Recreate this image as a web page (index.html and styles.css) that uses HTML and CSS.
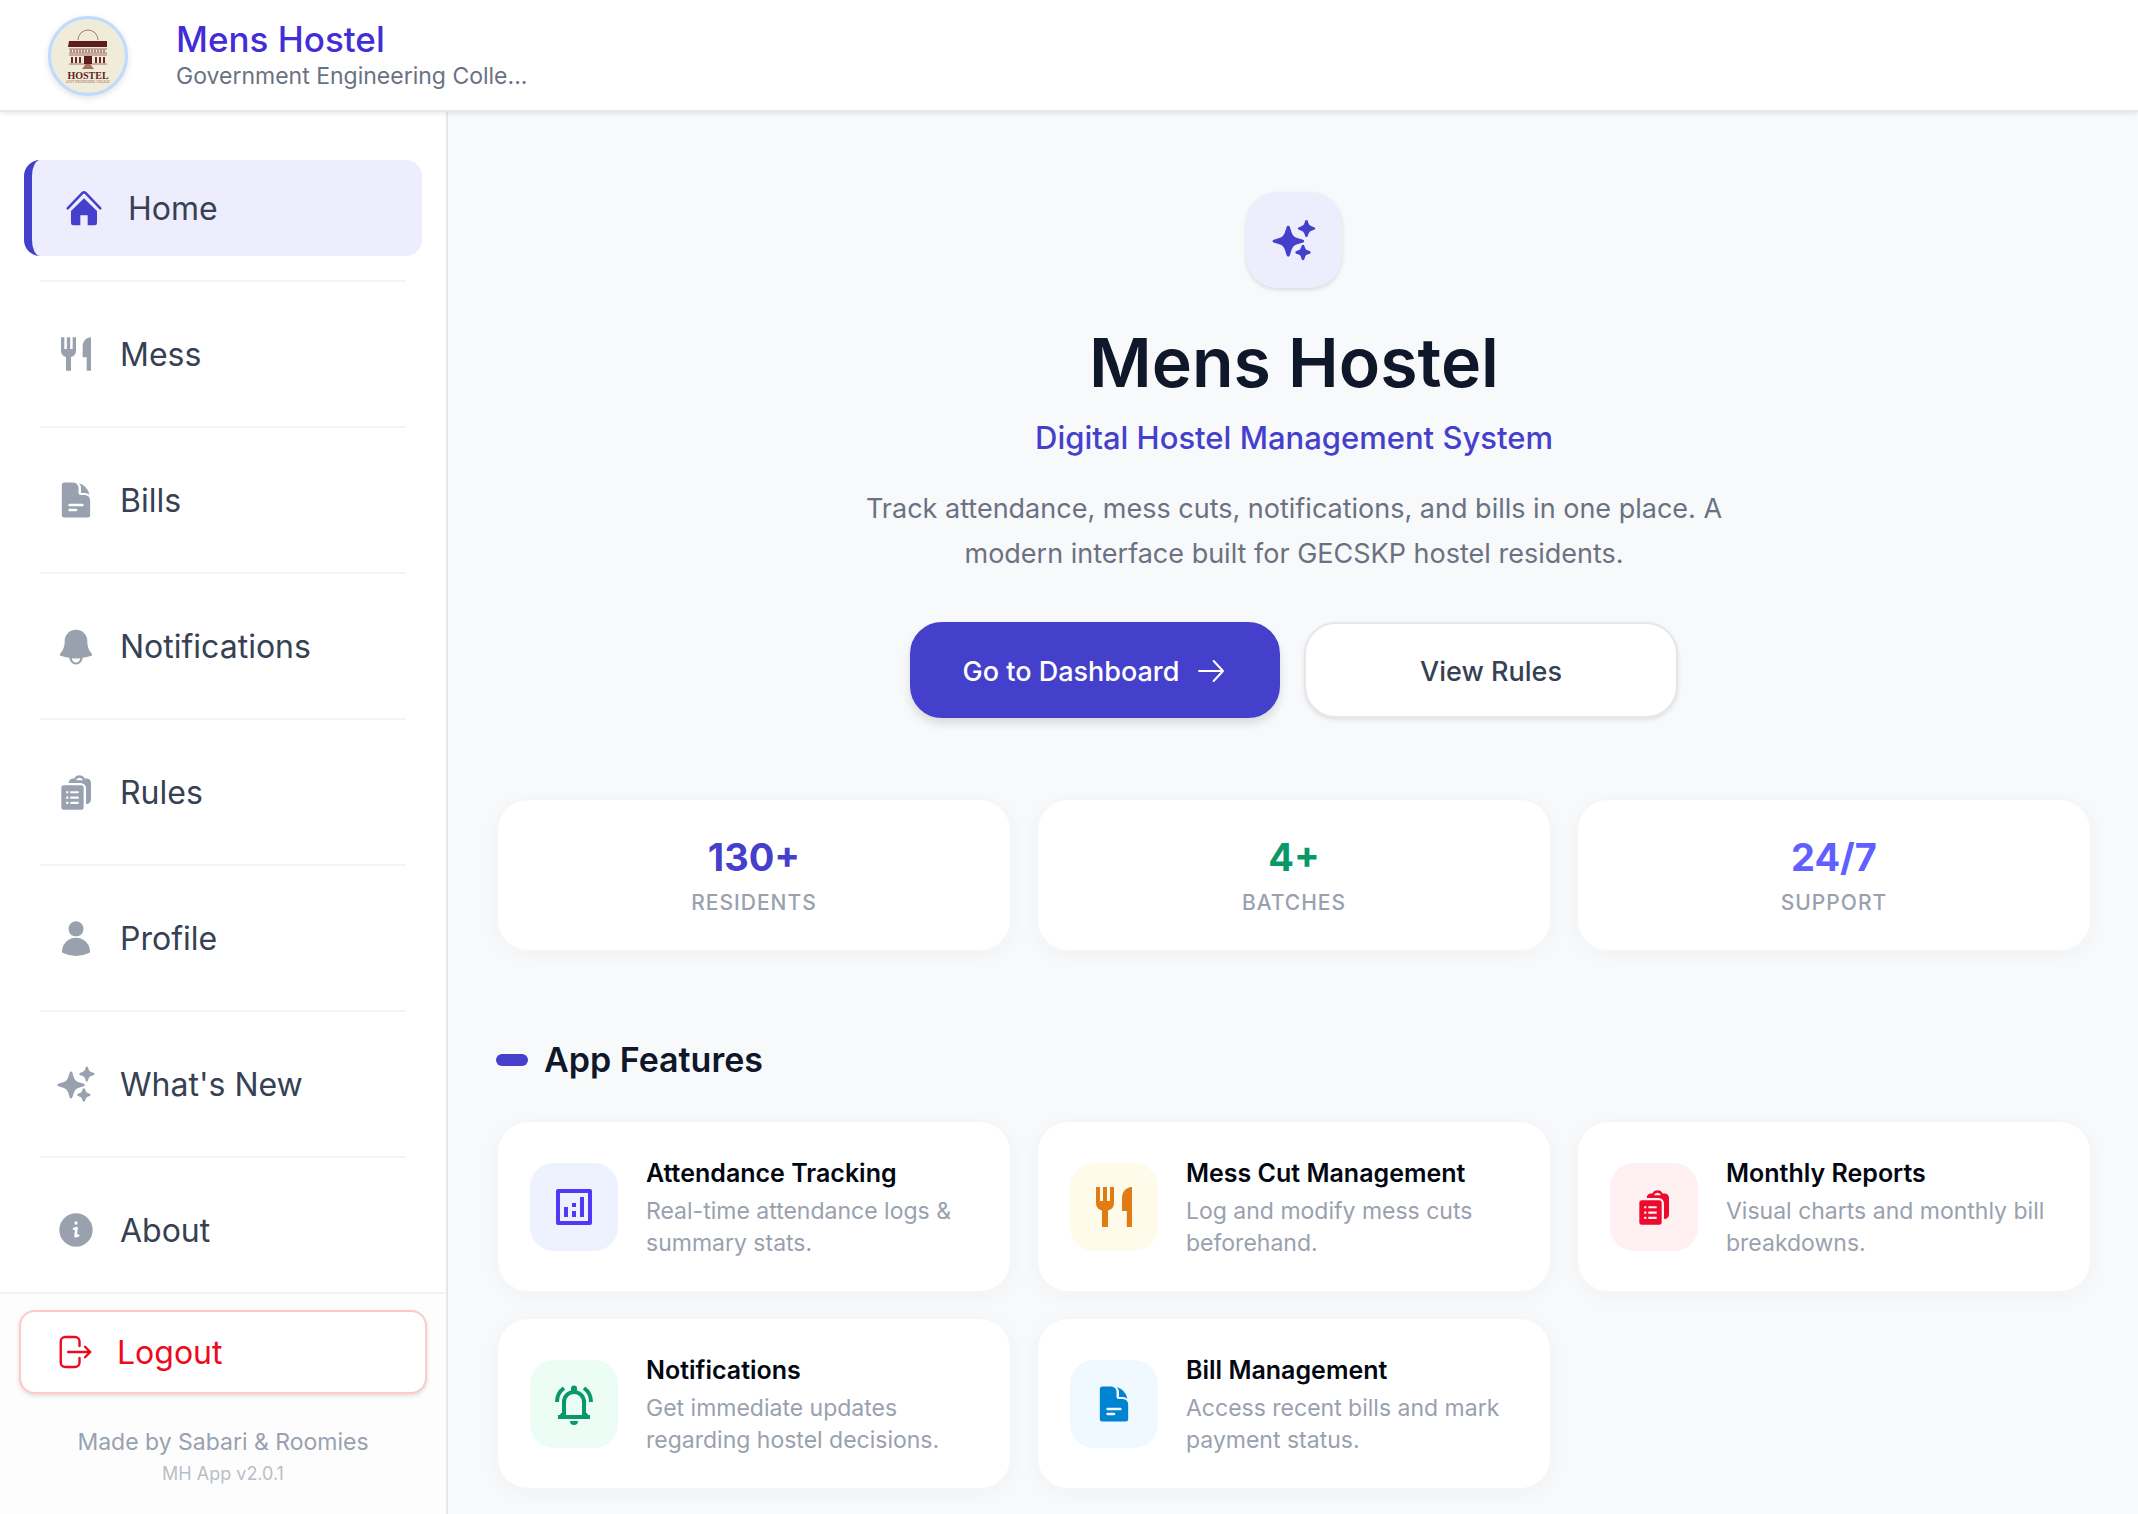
FILE: index.html
```
<!DOCTYPE html>
<html lang="en">
<head>
    <meta charset="UTF-8">
    <meta name="viewport" content="width=device-width, initial-scale=1">
    <title>Mens Hostel</title>
    <link rel="stylesheet" href="styles.css">
</head>
<body>
    <!-- Icons shared by the sidebar and the cards -->
    <svg class="sprite" aria-hidden="true">
        <symbol id="i-home" viewBox="0 0 24 24">
            <path d="M2.2 12.2 11.1 3a1.3 1.3 0 0 1 1.8 0l8.9 9.2" fill="none" stroke="currentColor" stroke-width="1.5" stroke-linecap="round"/>
            <path d="M12 6.2 19.800 13.800V21a1.4 1.4 0 0 1-1.4 1.4H14.200V16.400H9.800V22.400H5.600A1.400 1.400 0 0 1 4.200 21V13.800z"/>
        </symbol>
        <symbol id="i-mess" viewBox="0 0 24 24">
            <path d="M3 2h2v7h1.500V2h2v7H10V2h2v8a4 4 0 0 1-3 3.800V22H6v-8.200A4 4 0 0 1 3 10zM21 2v20h-2.600v-8H16V7.500C16 4.500 18 2 21 2z"/>
        </symbol>
        <symbol id="i-doc" viewBox="0 0 24 24">
            <path fill-rule="evenodd" d="M3.500 3A1.500 1.500 0 0 1 5 1.500h5.500A3.200 3.200 0 0 1 13.500 4.700V7.500A1.500 1.500 0 0 0 15 9h2.300a3.200 3.200 0 0 1 3.200 3.200V21a1.500 1.500 0 0 1-1.500 1.500H5A1.500 1.500 0 0 1 3.500 21zM8.200 14.200a.8.800 0 0 0 0 1.600h7.600a.8.800 0 0 0 0-1.600zM8.200 17.200a.8.800 0 0 0 0 1.600H12a.8.800 0 0 0 0-1.600z"/>
            <path d="M13.600 1.800a9.400 9.400 0 0 1 6.400 7 4.500 4.500 0 0 0-2.700-1H15V4.700c0-1.100-.6-2.100-1.400-2.900z"/>
        </symbol>
        <symbol id="i-bell" viewBox="0 0 24 24">
            <path fill-rule="evenodd" d="M5.200 9a6.800 6.800 0 0 1 13.600 0v.8c0 2.600.9 5 2.700 6.900.4.400.2 1-.3 1.200a24 24 0 0 1-5.200 1.200 4 4 0 0 1-8 0 24 24 0 0 1-5.200-1.200c-.5-.2-.7-.8-.3-1.200A10.500 10.500 0 0 0 5.200 9.800zM9.500 19.400a2.500 2.500 0 0 0 5 0 30 30 0 0 1-5 0z"/>
        </symbol>
        <symbol id="i-rules" viewBox="0 0 24 24">
            <path fill-rule="evenodd" d="M4.700 8h10.400A1.500 1.500 0 0 1 16.600 9.500V21.200A1.500 1.500 0 0 1 15.100 22.700H4.700A1.500 1.500 0 0 1 3.200 21.200V9.500A1.500 1.500 0 0 1 4.700 8zM6.100 11.500v1.300h1.300v-1.300zM8.600 11.500v1.300h5v-1.300zM6.100 14.700V16h1.300v-1.300zM8.600 14.700V16h5v-1.300zM6.100 17.900v1.300h1.300v-1.300zM8.600 17.900v1.300h5v-1.300z"/>
            <path fill-rule="evenodd" d="M7.600 6.600A2.600 2.600 0 0 1 10.200 3.900H11A3.400 3.400 0 0 1 14.100 1.900a3.400 3.400 0 0 1 3.100 2h1.200A2.600 2.600 0 0 1 21 6.500V16.600a2.600 2.600 0 0 1-3 2.500V9.800A3.200 3.200 0 0 0 14.800 6.600zM12 4.900h4.200A2.200 2.200 0 0 0 14.100 3.400a2.200 2.200 0 0 0-2.100 1.500z"/>
        </symbol>
        <symbol id="i-user" viewBox="0 0 24 24">
            <circle cx="12" cy="6.500" r="4.500"/>
            <path d="M3.600 20.200a8.400 8.400 0 0 1 16.800 0c0 .4-.2.700-.5.800a19 19 0 0 1-15.800 0c-.3-.1-.5-.4-.5-.8z"/>
        </symbol>
        <symbol id="i-spark" viewBox="0 0 24 24">
            <path d="M9 4.500q.6 0 .8.600l.9 2.900a4.500 4.500 0 0 0 3 3l3 .9q.6.200.6.700t-.6.700l-3 .9a4.500 4.500 0 0 0-3 3l-.9 2.900q-.2.600-.8.600t-.8-.6l-.9-2.900a4.500 4.500 0 0 0-3-3l-2.900-.9q-.6-.2-.6-.7t.6-.7l2.900-.9a4.500 4.500 0 0 0 3-3l.9-2.900q.2-.6.8-.6z"/>
            <path d="M18.500 1.500q.5 0 .7.600l.3 1a2.600 2.600 0 0 0 1.900 1.900l1.100.3q.6.200.6.700t-.6.700l-1.100.3a2.600 2.600 0 0 0-1.900 1.900l-.3 1q-.2.600-.7.600t-.7-.6l-.3-1A2.600 2.600 0 0 0 15.600 7l-1-.3Q14 6.500 14 6t.6-.7l1-.3a2.600 2.600 0 0 0 1.900-1.900l.3-1q.2-.6.700-.6z"/>
            <path d="M16.700 14.500q.5 0 .7.500l.4 1.200a1.900 1.900 0 0 0 1.200 1.200l1.200.4q.5.200.5.700t-.5.700l-1.200.4a1.900 1.900 0 0 0-1.200 1.200l-.4 1.200q-.2.500-.7.500t-.7-.5l-.4-1.200a1.900 1.900 0 0 0-1.200-1.200l-1.200-.4q-.5-.2-.5-.7t.5-.7l1.200-.4a1.900 1.900 0 0 0 1.200-1.200l.4-1.200q.2-.5.700-.5z"/>
        </symbol>
        <symbol id="i-info" viewBox="0 0 24 24">
            <circle cx="12" cy="12" r="10"/>
            <circle cx="12" cy="7.800" r="1" fill="#fff"/>
            <path d="M10.800 11.300 12.300 10.800 11.700 15.800 13.300 15.300" fill="none" stroke="#fff" stroke-width="1.500" stroke-linecap="round" stroke-linejoin="round"/>
        </symbol>
        <symbol id="i-chart" viewBox="0 0 24 24">
            <path d="M4 4h16v16H4z" fill="none" stroke="currentColor" stroke-width="2" stroke-linejoin="round"/>
            <path d="M7 12h2v5H7zM11 10h2v2h-2zM11 14h2v3h-2zM15 7h2v10h-2z"/>
        </symbol>
        <symbol id="i-ring" viewBox="0 0 24 24">
            <path d="M4 18.500h16M7 18.500V11a5 5 0 0 1 10 0v7.500M3.500 11A8.500 8.500 0 0 1 7 4M20.500 11A8.500 8.500 0 0 0 17 4" fill="none" stroke="currentColor" stroke-width="2"/>
            <path d="M5.500 16.500h1v2h-2zM18.500 16.500h-1v2h2zM10.500 6V4.300a1.500 1.500 0 0 1 3 0V6zM10 20.500h4a2 2 0 0 1-4 0z"/>
        </symbol>
        <symbol id="i-logout" viewBox="0 0 24 24">
            <path d="M15 8V5a3 3 0 0 0-3-3H5.500a3 3 0 0 0-3 3v14a3 3 0 0 0 3 3H12a3 3 0 0 0 3-3v-3M7.500 12H22M18.700 8.500 22.200 12l-3.500 3.500" fill="none" stroke="currentColor" stroke-width="1.600" stroke-linecap="round" stroke-linejoin="round"/>
        </symbol>
        <symbol id="i-arrow" viewBox="0 0 24 24">
            <path d="M3 12h18M14 4.500 21 12l-7 7.500" fill="none" stroke="currentColor" stroke-width="1.500" stroke-linecap="round" stroke-linejoin="round"/>
        </symbol>
    </svg>

    <header class="topbar">
        <svg class="logo" viewBox="0 0 74 74" role="img" aria-label="Hostel">
            <path d="M27 21a10 10 0 0 1 20 0" fill="none" stroke="#a77a6c" stroke-width="1"/>
            <path d="M18 22h38v6H17z" fill="#5f1d1b"/>
            <path d="M18 30h38M18 34h38M18 36h38M18 45h38" stroke="#a06a5f" stroke-width="1"/>
            <path d="M19 32h36" stroke="#a98a84" stroke-width="3" stroke-dasharray="2 1"/>
            <path d="M21 38v6M25 38v6M29 38v6M45 38v6M49 38v6M53 38v6" stroke="#6d2724" stroke-width="2"/>
            <path d="M33 37h8v8h-8z" fill="#5f1d1b"/>
            <path d="M35 45h4l4 5H31z" fill="#a8705f"/>
            <text class="logo-name" x="37" y="60" text-anchor="middle">HOSTEL</text>
            <text class="logo-tag" x="37" y="64" text-anchor="middle">GOVT ENGINEERING COLLEGE</text>
        </svg>
        <div class="brand">
            <div class="brand-name">Mens Hostel</div>
            <div class="brand-sub">Government Engineering Colle...</div>
        </div>
    </header>

    <div class="layout">
        <aside class="sidebar">
            <nav class="menu">
                <a href="#" class="item active"><svg class="icon"><use href="#i-home"/></svg>Home</a>
                <a href="#" class="item"><svg class="icon"><use href="#i-mess"/></svg>Mess</a>
                <a href="#" class="item"><svg class="icon"><use href="#i-doc"/></svg>Bills</a>
                <a href="#" class="item"><svg class="icon"><use href="#i-bell"/></svg>Notifications</a>
                <a href="#" class="item"><svg class="icon"><use href="#i-rules"/></svg>Rules</a>
                <a href="#" class="item"><svg class="icon"><use href="#i-user"/></svg>Profile</a>
                <a href="#" class="item"><svg class="icon"><use href="#i-spark"/></svg>What's New</a>
                <a href="#" class="item"><svg class="icon"><use href="#i-info"/></svg>About</a>
            </nav>
            <div class="side-footer">
                <button type="button" class="logout"><svg class="icon"><use href="#i-logout"/></svg>Logout</button>
                <p class="made">Made by Sabari &amp; Roomies</p>
                <p class="version">MH App v2.0.1</p>
            </div>
        </aside>

        <main class="content">
            <section class="hero">
                <div class="hero-icon"><svg><use href="#i-spark"/></svg></div>
                <h1>Mens Hostel</h1>
                <p class="subtitle">Digital Hostel Management System</p>
                <p class="lead">Track attendance, mess cuts, notifications, and bills in one place. A modern interface built for GECSKP hostel residents.</p>
                <div class="actions">
                    <button type="button" class="btn primary">Go to Dashboard <svg><use href="#i-arrow"/></svg></button>
                    <button type="button" class="btn">View Rules</button>
                </div>
            </section>

            <section class="grid stats">
                <div class="stat">
                    <div class="number indigo">130+</div>
                    <div class="label">RESIDENTS</div>
                </div>
                <div class="stat">
                    <div class="number green">4+</div>
                    <div class="label">BATCHES</div>
                </div>
                <div class="stat">
                    <div class="number violet">24/7</div>
                    <div class="label">SUPPORT</div>
                </div>
            </section>

            <h2><span class="pill"></span>App Features</h2>

            <section class="grid">
                <div class="feature">
                    <div class="tile tile-indigo"><svg><use href="#i-chart"/></svg></div>
                    <div>
                        <h3>Attendance Tracking</h3>
                        <p>Real-time attendance logs &amp; summary stats.</p>
                    </div>
                </div>
                <div class="feature">
                    <div class="tile tile-amber"><svg><use href="#i-mess"/></svg></div>
                    <div>
                        <h3>Mess Cut Management</h3>
                        <p>Log and modify mess cuts beforehand.</p>
                    </div>
                </div>
                <div class="feature">
                    <div class="tile tile-red"><svg class="small"><use href="#i-rules"/></svg></div>
                    <div>
                        <h3>Monthly Reports</h3>
                        <p>Visual charts and monthly bill breakdowns.</p>
                    </div>
                </div>
                <div class="feature">
                    <div class="tile tile-green"><svg><use href="#i-ring"/></svg></div>
                    <div>
                        <h3>Notifications</h3>
                        <p>Get immediate updates regarding hostel decisions.</p>
                    </div>
                </div>
                <div class="feature">
                    <div class="tile tile-blue"><svg class="small"><use href="#i-doc"/></svg></div>
                    <div>
                        <h3>Bill Management</h3>
                        <p>Access recent bills and mark payment status.</p>
                    </div>
                </div>
            </section>
        </main>
    </div>
</body>
</html>
```
FILE: styles.css
```
* {
    box-sizing: border-box;
    margin: 0;
    padding: 0;
}

body {
    display: flex;
    flex-direction: column;
    height: 100vh;
    overflow: hidden;
    background-color: #f8f9fb;
    font-family: Inter, "Noto Sans", sans-serif;
    color: #0f172a;
}

svg {
    fill: currentColor;
    flex-shrink: 0;
}

button {
    font-family: inherit;
    cursor: pointer;
}

.sprite {
    display: none;
}

/* Top bar */
.topbar {
    position: relative;
    z-index: 1;
    display: flex;
    align-items: center;
    gap: 48px;
    flex-shrink: 0;
    padding: 16px 48px 14px;
    background-color: #ffffff;
    border-bottom: 2px solid #e5e7eb;
    box-shadow: 0 2px 4px rgba(0,0,0,0.08);
}

.logo {
    width: 80px;
    height: 80px;
    border: 3px solid #bedbff;
    border-radius: 50%;
    background-color: #f0ecd9;
    box-shadow: 0 2px 6px rgba(0,0,0,0.12);
}

.logo-name {
    font-family: "Liberation Serif", serif;
    font-size: 10px;
    font-weight: bold;
    fill: #5f1d1b;
}

.logo-tag {
    font-family: "Liberation Serif", serif;
    font-size: 3px;
    fill: #8a5b57;
}

.brand-name {
    font-size: 35px;
    font-weight: 500;
    line-height: 40px;
    color: #432dd7;
}

.brand-sub {
    font-size: 23px;
    line-height: 34px;
    color: #6a7282;
}

/* Sidebar */
.layout {
    display: flex;
    flex: 1;
    min-height: 0;
}

.sidebar {
    display: flex;
    flex-direction: column;
    width: 448px;
    flex-shrink: 0;
    background-color: #ffffff;
    border-right: 2px solid #e5e7eb;
}

.menu {
    flex: 1;
    min-height: 0;
    overflow: hidden;
    padding: 48px 24px 0;
}

.item {
    display: flex;
    align-items: center;
    gap: 24px;
    height: 96px;
    padding: 0 32px;
    border-radius: 16px;
    font-size: 32px;
    color: #364153;
    text-decoration: none;
}

.item + .item {
    position: relative;
    margin-top: 50px;
}

.item + .item::before {
    content: "";
    position: absolute;
    top: -26px;
    left: 16px;
    right: 16px;
    height: 2px;
    background-color: #f3f4f6;
}

.item .icon {
    width: 40px;
    height: 40px;
    color: #99a1af;
}

.active {
    border-left: 8px solid #4540cc;
    background-color: #eeedfe;
}

.item.active .icon {
    color: #4540cc;
}

.side-footer {
    padding: 16px 19px 24px;
    border-top: 2px solid #f3f4f6;
    background-color: #fdfdfe;
    text-align: center;
}

.logout {
    display: flex;
    align-items: center;
    gap: 24px;
    width: 100%;
    height: 84px;
    padding: 0 36px;
    border: 2px solid #ffc9c9;
    border-radius: 16px;
    background-color: #ffffff;
    box-shadow: 0 2px 4px rgba(0,0,0,0.12);
    font-size: 32px;
    color: #ec0a20;
}

.logout .icon {
    width: 36px;
    height: 36px;
}

.made {
    margin-top: 32px;
    font-size: 23px;
    line-height: 32px;
    color: #99a1af;
}

.version {
    font-size: 18px;
    line-height: 32px;
    color: #b9bec8;
}

/* Main content */
.content {
    flex: 1;
    overflow: hidden;
    padding: 80px 46px 0 48px;
}

.hero {
    display: flex;
    flex-direction: column;
    align-items: center;
    text-align: center;
}

.hero-icon {
    display: flex;
    align-items: center;
    justify-content: center;
    width: 96px;
    height: 96px;
    border-radius: 32px;
    background-color: #eeedfe;
    box-shadow: 0 2px 4px rgba(0,0,0,0.12);
    color: #4540cc;
}

.hero-icon svg {
    width: 46px;
    height: 46px;
}

h1 {
    margin-top: 34px;
    font-size: 68px;
    font-weight: 600;
    line-height: 80px;
}

.subtitle {
    margin-top: 16px;
    font-size: 31px;
    font-weight: 500;
    line-height: 40px;
    color: #4540cc;
}

.lead {
    max-width: 896px;
    margin-top: 28px;
    font-size: 27px;
    line-height: 45px;
    color: #6a7282;
}

.actions {
    display: flex;
    gap: 24px;
    margin-top: 46px;
}

.btn {
    display: flex;
    align-items: center;
    justify-content: center;
    gap: 16px;
    width: 374px;
    height: 96px;
    padding-top: 2px;
    border: 2px solid #e5e7eb;
    border-radius: 32px;
    background-color: #ffffff;
    box-shadow: 0 2px 4px rgba(0,0,0,0.1);
    font-size: 27px;
    font-weight: 500;
    color: #364153;
}

.btn svg {
    width: 32px;
    height: 32px;
}

.primary {
    width: 370px;
    border-color: #4540cc;
    background-color: #4540cc;
    box-shadow: 0 6px 10px rgba(0,0,0,0.12);
    color: #ffffff;
}

.grid {
    display: grid;
    grid-template-columns: repeat(3, 1fr);
    gap: 24px;
}

.stats {
    margin-top: 80px;
}

.stat, .feature {
    border: 2px solid #f5f6f8;
    border-radius: 32px;
    background-color: #ffffff;
    background-clip: padding-box;
    box-shadow: 0 4px 20px rgba(0,0,0,0.03);
}

.stat {
    padding: 29px 0;
    text-align: center;
}

.number {
    font-size: 38px;
    font-weight: 700;
    line-height: 56px;
}

.indigo {
    color: #4540cc;
}

.green {
    color: #099868;
}

.violet {
    color: #615fff;
}

.label {
    font-size: 21px;
    font-weight: 500;
    line-height: 36px;
    letter-spacing: 1px;
    color: #99a1af;
}

h2 {
    display: flex;
    align-items: center;
    gap: 16px;
    margin: 82px 0 34px;
    font-size: 34px;
    font-weight: 600;
    line-height: 52px;
}

.pill {
    width: 32px;
    height: 12px;
    border-radius: 6px;
    background-color: #4540cc;
}

.feature {
    display: flex;
    align-items: center;
    gap: 28px;
    min-height: 173px;
    padding: 0 32px;
}

.tile {
    display: flex;
    align-items: center;
    justify-content: center;
    flex-shrink: 0;
    width: 88px;
    height: 88px;
    border-radius: 24px;
}

.tile svg {
    width: 48px;
    height: 48px;
}

.tile .small {
    width: 40px;
    height: 40px;
}

.tile-indigo {
    background-color: #eef2ff;
    color: #4f39f6;
}

.tile-amber {
    background-color: #fffbeb;
    color: #e17b14;
}

.tile-red {
    background-color: #fff1f2;
    color: #ed0a2d;
}

.tile-green {
    background-color: #ecfdf5;
    color: #099868;
}

.tile-blue {
    background-color: #f0f9ff;
    color: #0084d1;
}

h3 {
    margin-bottom: 4px;
    font-size: 25px;
    font-weight: 600;
    line-height: 36px;
    color: #030712;
}

.feature p {
    font-size: 23px;
    line-height: 32px;
    color: #99a1af;
}
```
